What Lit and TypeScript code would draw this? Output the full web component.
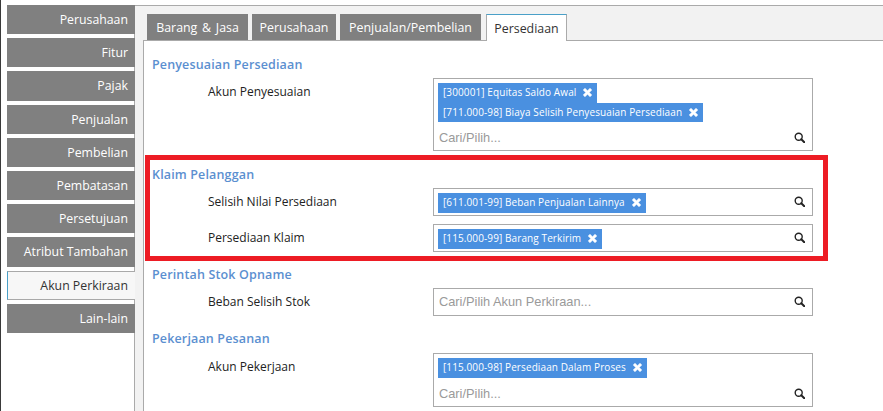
import { LitElement, html, css, svg } from "lit";
import { customElement } from "lit/decorators.js";

const NAV = ["Perusahaan","Fitur","Pajak","Penjualan","Pembelian","Pembatasan","Persetujuan","Atribut Tambahan","Akun Perkiraan","Lain-lain"];
const TABS = [
  { name: "Barang & Jasa", width: 101 },
  { name: "Perusahaan", width: 84 },
  { name: "Penjualan/Pembelian", width: 141 },
  { name: "Persediaan", width: 81 },
];
type Row = { label: string; chips: string[]; ph?: string };
type Sec = { title: string; rows: Row[]; cls: string };
const SECTIONS: Sec[] = [
  { title: "Penyesuaian Persediaan", cls: "", rows: [{ label: "Akun Penyesuaian", chips: ["[300001] Equitas Saldo Awal", "[711.000-98] Biaya Selisih Penyesuaian Persediaan"], ph: "Cari/Pilih..." }] },
  { title: "Klaim Pelanggan", cls: "after-big", rows: [
    { label: "Selisih Nilai Persediaan", chips: ["[611.001-99] Beban Penjualan Lainnya"] },
    { label: "Persediaan Klaim", chips: ["[115.000-99] Barang Terkirim"] } ] },
  { title: "Perintah Stok Opname", cls: "", rows: [{ label: "Beban Selisih Stok", chips: [], ph: "Cari/Pilih Akun Perkiraan..." }] },
  { title: "Pekerjaan Pesanan", cls: "tall-title", rows: [{ label: "Akun Pekerjaan", chips: ["[115.000-98] Persediaan Dalam Proses"], ph: "Cari/Pilih..." }] },
];

const xIcon = svg`<path d="M1.2 3 3 1.2 5.5 3.7 8 1.2 9.8 3 7.3 5.5 9.8 8 8 9.8 5.5 7.3 3 9.8 1.2 8 3.7 5.5Z" fill="#fff" stroke="#fff" stroke-width=".5" stroke-linejoin="round"/>`;
const searchIcon = svg`<circle cx="4.7" cy="4.7" r="3.5" fill="none" stroke="#222" stroke-width="1.4"/><path d="M7.3 7.3 10.4 10.4" stroke="#222" stroke-width="2" stroke-linecap="round"/>`;

@customElement("app-root")
export class AppRoot extends LitElement {
  static styles = css`
    :host { display: block; height: 411px; width: 883px; overflow: hidden; position: relative; background: #fff;
      font-family: "Open Sans", "Noto Sans", sans-serif; font-size: 12px; color: #222; box-sizing: border-box; }
    .page { display: flex; height: 411px; box-sizing: border-box; padding: 5px 0 0 7px; position: relative; }
    .edge { position: absolute; left: 0; top: 0; bottom: 0; width: 1px; background: #3a3a3a; }
    .nav { width: 128px; flex: none; display: flex; flex-direction: column; gap: 4px; margin-right: -1px; position: relative; z-index: 1; }
    .nav-item { height: 29.2px; box-sizing: border-box; background: #808080; color: #fff; text-align: right; padding-right: 7px;
      line-height: 30px; font-size: 12.3px; }
    .nav-item.active { background: #f7f7f7; color: #333; border: 1px solid #a9a9a9; border-left-color: #4aa0c8; border-right: none; line-height: 28px; padding-right: 7px; }
    .panel { flex: 1; border-left: 1px solid #aaa; border-top: 1px solid #aaa; background: #f2f2f2; padding-left: 8px; display: flex; flex-direction: column; min-width: 0; }
    .tabs { display: flex; gap: 4px; height: 26px; margin-top: 8px; padding-left: 4px; position: relative; z-index: 1; }
    .tab { background: #808080; color: #fff; font-size: 12.4px; word-spacing: 1.5px; text-align: center; line-height: 27px; box-sizing: border-box; height: 26px; white-space: nowrap; }
    .tab.active { background: #fff; color: #333; border: 1px solid #aaa; border-top-color: #4aa0c8; border-bottom: none; height: 27px; margin-left: 1px; line-height: 27px; }
    .content { flex: 1; background: #fff; border-left: 1px solid #aaa; border-top: 1px solid #aaa; padding: 13px 70px 0 8px; }
    .section { margin-bottom: 12px; }
    .section.after-big { margin-top: 13px; }
    .title { height: 20px; line-height: 21px; font-size: 12.5px; font-weight: 600; color: #5b8fd0; letter-spacing: .15px; }
    .tall-title .title { height: 21px; }
    .row { display: flex; margin-top: 4px; }
    .row + .row { margin-top: 8px; }
    .label { width: 281px; flex: none; padding-left: 56px; box-sizing: border-box; font-size: 12px; line-height: 18px; padding-top: 5px; color: #222; }
    .field { width: 380px; flex: none; box-sizing: border-box; border: 1px solid #aaa; background: #fff; padding: 4px; position: relative; min-height: 28px; }
    .field.single { padding-bottom: 2.5px; }
    .chips { display: flex; flex-direction: column; align-items: flex-start; }
    .chip { background: #4a90e0; color: #fff; font-size: 10px; height: 19.5px; line-height: 19px; padding: 0 4px 0 5px; display: flex; align-items: center; gap: 6px; white-space: nowrap; letter-spacing: .1px; }
    .chip svg { width: 11px; height: 11px; flex: none; }
    .input { font-family: "Liberation Sans", Arial, sans-serif; font-size: 12.8px; color: #9a9a9a; height: 27px; line-height: 27px; margin: 2px 0 -5px 1px; }
    .ph-only { height: 26px; line-height: 26px; margin: -4px 0 -4px 1px; }
    .mag { position: absolute; right: 7px; bottom: 8px; width: 11px; height: 11px; }
    .multi .mag { bottom: 7px; }
    .hl { position: absolute; left: 145px; top: 155px; width: 683px; height: 106px; box-sizing: border-box; border: 5px solid #ed1c24; z-index: 2; pointer-events: none; }
  `;

  render() {
    return html`<div class="page">
      <div class="edge"></div>
      <div class="nav">${NAV.map((n) => html`<div class="nav-item ${n === "Akun Perkiraan" ? "active" : ""}">${n}</div>`)}</div>
      <div class="panel">
        <div class="tabs">${TABS.map((t) => html`<div class="tab ${t.name === "Persediaan" ? "active" : ""}" style="width:${t.width}px">${t.name}</div>`)}</div>
        <div class="content">
          ${SECTIONS.map((s) => html`<div class="section ${s.cls}">
            <div class="title">${s.title}</div>
            ${s.rows.map((r) => html`<div class="row">
              <div class="label">${r.label}</div>
              <div class="field ${r.chips.length && r.ph ? "multi" : "single"}">
                ${r.chips.length ? html`<div class="chips">${r.chips.map((c) => html`<div class="chip">${c}<svg viewBox="0 0 11 11">${xIcon}</svg></div>`)}</div>` : ""}
                ${r.ph ? html`<div class="input ${r.chips.length ? "" : "ph-only"}">${r.ph}</div>` : ""}
                <svg class="mag" viewBox="0 0 11 11">${searchIcon}</svg>
              </div>
            </div>`)}
          </div>`)}
        </div>
      </div>
      <div class="hl"></div>
    </div>`;
  }
}
